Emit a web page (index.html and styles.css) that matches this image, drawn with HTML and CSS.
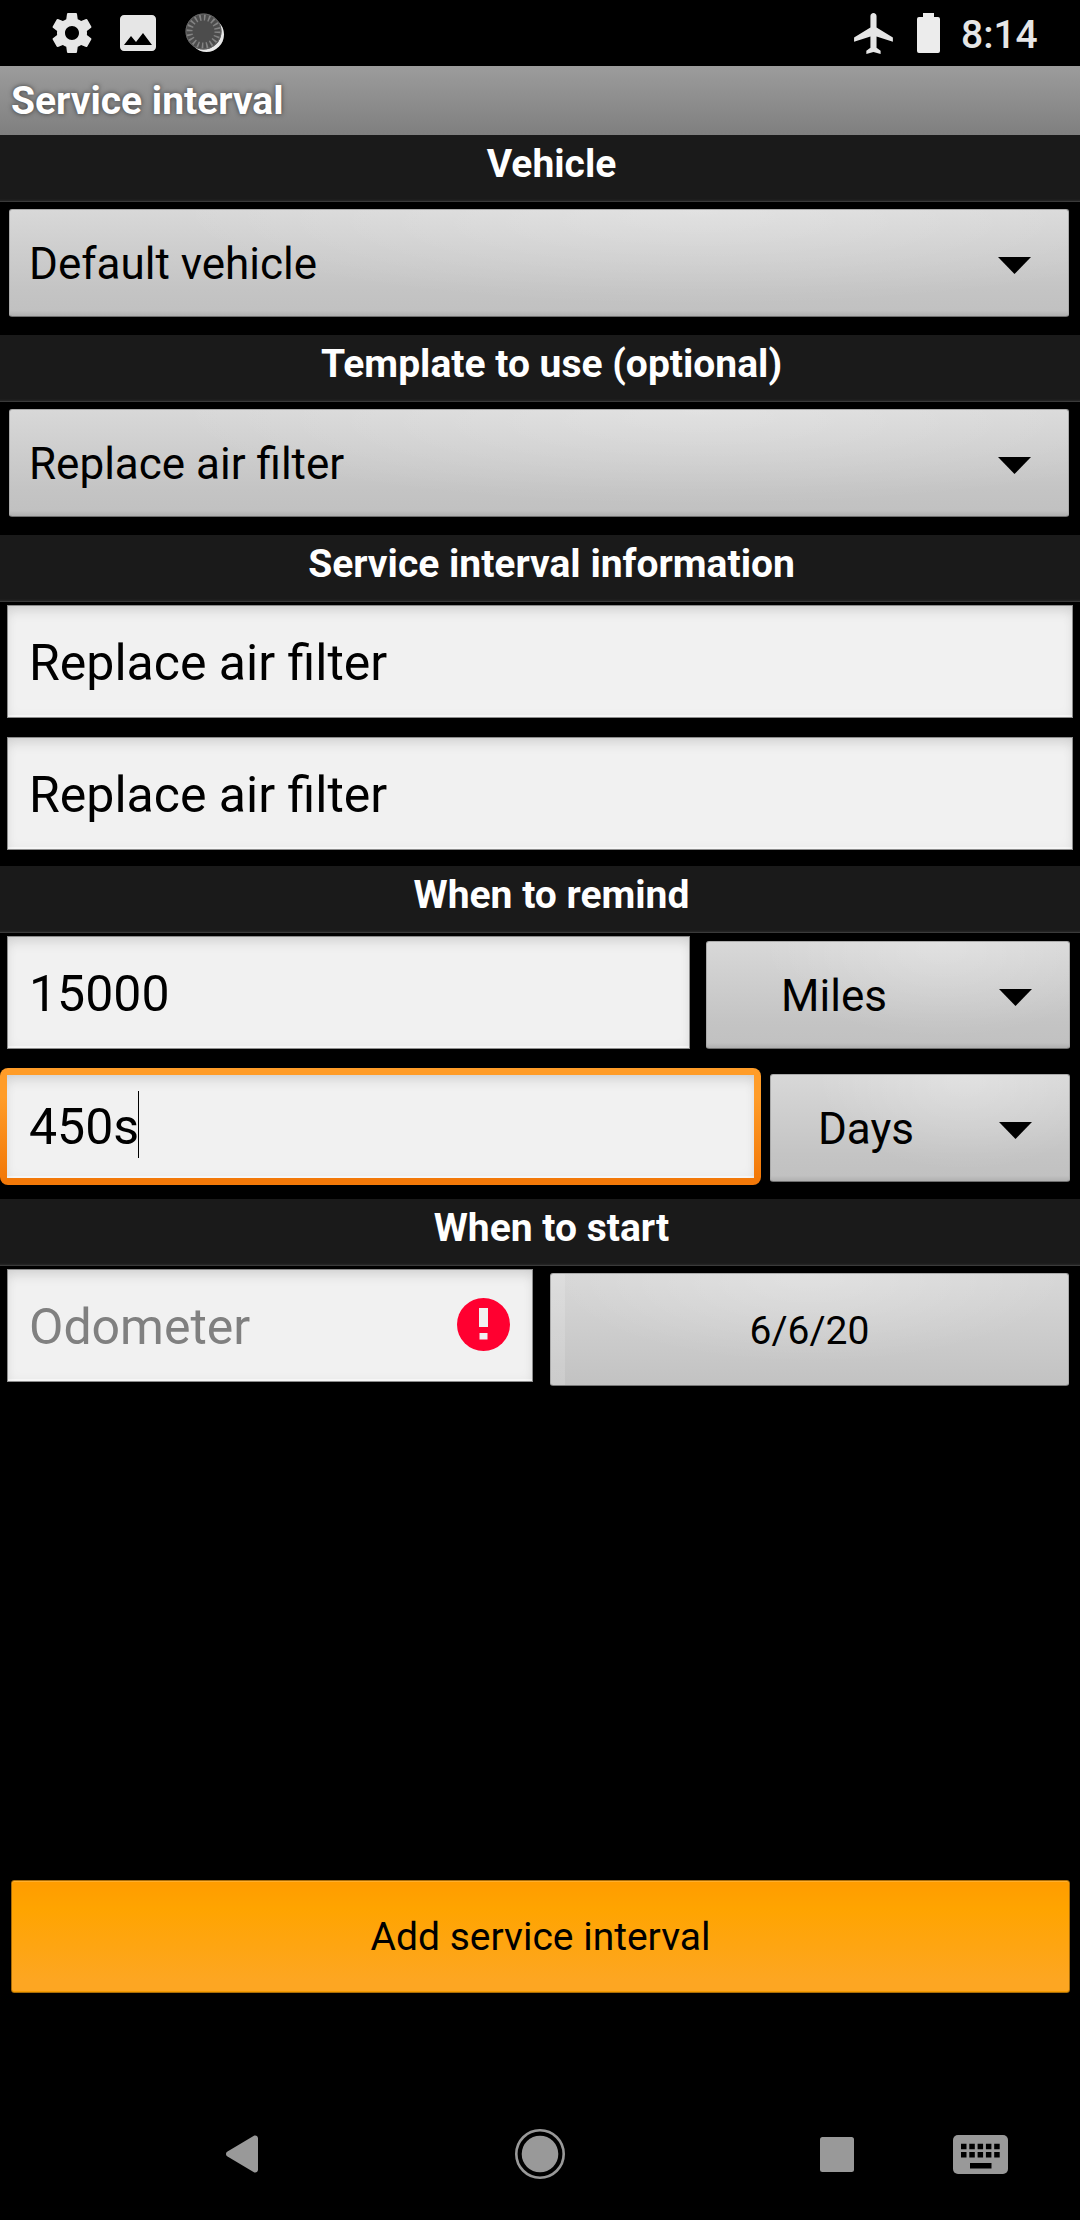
FILE: index.html
```html
<!DOCTYPE html>
<html lang="en">
<head>
<meta charset="utf-8">
<title>Service interval</title>
<link rel="stylesheet" href="styles.css">
</head>
<body>
<div class="status-bar">
  <svg class="gear" width="48" height="48" viewBox="0 0 24 24"><path fill="#e6e6e6" d="M19.43 12.98c.04-.32.07-.64.07-.98s-.03-.66-.07-.98l2.11-1.65c.19-.15.24-.42.12-.64l-2-3.46c-.12-.22-.39-.3-.61-.22l-2.49 1c-.52-.4-1.08-.73-1.69-.98l-.38-2.65C14.46 2.18 14.25 2 14 2h-4c-.25 0-.46.18-.49.42l-.38 2.65c-.61.25-1.17.59-1.69.98l-2.49-1c-.23-.09-.49 0-.61.22l-2 3.46c-.13.22-.07.49.12.64l2.11 1.65c-.04.32-.07.65-.07.98s.03.66.07.98l-2.11 1.65c-.19.15-.24.42-.12.64l2 3.46c.12.22.39.3.61.22l2.49-1c.52.4 1.08.73 1.69.98l.38 2.65c.03.24.24.42.49.42h4c.25 0 .46-.18.49-.42l.38-2.65c.61-.25 1.17-.59 1.69-.98l2.49 1c.23.09.49 0 .61-.22l2-3.46c.12-.22.07-.49-.12-.64l-2.11-1.65zM12 15.5c-1.93 0-3.5-1.57-3.5-3.5s1.57-3.5 3.5-3.5 3.5 1.57 3.5 3.5-1.57 3.5-3.5 3.5z"/></svg>
  <svg class="picture" width="48" height="48" viewBox="0 0 24 24"><path fill="#e6e6e6" d="M21 19V5c0-1.100-.9-2-2-2H5c-1.100 0-2 .9-2 2v14c0 1.100.9 2 2 2h14c1.100 0 2-.9 2-2zM8.500 13.500l2.500 3.010L14.500 12l4.500 6H5l3.500-4.500z"/></svg>
  <svg class="loader" width="40" height="40" viewBox="0 0 40 40">
    <circle cx="21.500" cy="21.500" r="17.500" fill="#e9e9e9"/>
    <circle cx="18.500" cy="18.500" r="18" fill="#4c4c4c"/>
    <circle cx="18.500" cy="18.500" r="14" fill="none" stroke="#838383" stroke-width="6" stroke-dasharray="1.600 2.798"/>
    <circle cx="18.500" cy="18.500" r="17.500" fill="none" stroke="#666" stroke-width="1"/>
  </svg>
  <svg class="plane" width="49" height="49" viewBox="0 0 24 24"><path fill="#e6e6e6" d="M21 16v-2l-8-5V3.500c0-.83-.67-1.500-1.500-1.500S10 2.670 10 3.500V9l-8 5v2l8-2.500V19l-2 1.500V22l3.500-1 3.500 1v-1.500L13 19v-5.500l8 2.500z"/></svg>
  <svg class="battery" width="23" height="40" viewBox="0 0 23 40"><path fill="#ececec" d="M6 0h11v4h4a2 2 0 0 1 2 2v32a2 2 0 0 1-2 2H2a2 2 0 0 1-2-2V6a2 2 0 0 1 2-2h4z"/></svg>
  <span class="clock">8:14</span>
</div>

<h1 class="title-bar">Service interval</h1>

<main class="form">
  <h2 class="section-title">Vehicle</h2>
  <div class="spinner-row">
    <div class="spinner"><span class="spinner-text">Default vehicle</span><svg class="arrow" width="33" height="17" viewBox="0 0 33 17"><path d="M0 0h33L16.500 17z"/></svg></div>
  </div>

  <h2 class="section-title">Template to use (optional)</h2>
  <div class="spinner-row">
    <div class="spinner"><span class="spinner-text">Replace air filter</span><svg class="arrow" width="33" height="17" viewBox="0 0 33 17"><path d="M0 0h33L16.500 17z"/></svg></div>
  </div>

  <h2 class="section-title">Service interval information</h2>
  <div class="info-fields">
    <div class="input">Replace air filter</div>
    <div class="input">Replace air filter</div>
  </div>

  <h2 class="section-title">When to remind</h2>
  <div class="remind-fields">
    <div class="row distance-row">
      <div class="input">15000</div>
      <div class="spinner centered"><span class="spinner-text">Miles</span><svg class="arrow" width="33" height="17" viewBox="0 0 33 17"><path d="M0 0h33L16.500 17z"/></svg></div>
    </div>
    <div class="row time-row">
      <div class="focus-ring"><div class="input">450s<span class="caret"></span></div></div>
      <div class="spinner centered"><span class="spinner-text">Days</span><svg class="arrow" width="33" height="17" viewBox="0 0 33 17"><path d="M0 0h33L16.500 17z"/></svg></div>
    </div>
  </div>

  <h2 class="section-title">When to start</h2>
  <div class="row start-row">
    <div class="input odometer"><span>Odometer</span>
      <svg width="53" height="53" viewBox="0 0 53 53"><circle cx="26.500" cy="26.500" r="26.500" fill="#ff0030"/><path fill="#f1f1f1" d="M22 10h9v19h-9zM22.500 35h8v6.500h-8z"/></svg>
    </div>
    <div class="date-button">6/6/20</div>
  </div>

  <div class="add-button">Add service interval</div>
</main>

<nav class="nav-bar">
  <svg class="back" width="32" height="38" viewBox="0 0 32 38"><path fill="#999" d="M27.500 1C29.500-.2 32 .8 32 3.500v31c0 2.700-2.500 3.700-4.500 2.500L1.500 21.500c-2-1.200-2-3.800 0-5z"/></svg>
  <svg class="home" width="50" height="50" viewBox="0 0 50 50"><circle cx="25" cy="25" r="23.700" fill="none" stroke="#999" stroke-width="2.600"/><circle cx="25" cy="25" r="18.300" fill="#999"/></svg>
  <svg class="recent" width="34" height="35" viewBox="0 0 34 35"><rect width="34" height="35" rx="2.500" fill="#999"/></svg>
  <svg class="keyboard" width="55" height="39" viewBox="0 0 55 39"><rect width="55" height="39" rx="5" fill="#999"/><path stroke="#000" stroke-width="5.500" stroke-dasharray="5.500 2.800" d="M8 11.500h39M8 19.800h39"/><path d="M17 28h21.500v5.500H17z"/></svg>
</nav>
</body>
</html>
```
FILE: styles.css
```css
* {
  box-sizing: border-box;
}

body {
  margin: 0;
  width: 1080px;
  height: 2220px;
  display: flex;
  flex-direction: column;
  background: #000;
  color: #000;
  font-family: Roboto, "Liberation Sans", sans-serif;
  font-size: 39px;
  overflow: hidden;
}

svg {
  display: block;
  flex: none;
}

/* Status bar */
.status-bar {
  height: 66px;
  display: flex;
  align-items: flex-start;
  padding: 9px 42px 0 48px;
}

.picture {
  margin-left: 18px;
}

.loader {
  margin: 4px 0 0 23px;
}

.plane {
  margin-left: auto;
}

.battery {
  margin: 4px 0 0 18px;
}

.clock {
  width: 77px;
  margin: -9px 0 0 21px;
  color: #e6e6e6;
  font-weight: 500;
  line-height: 70px;
  white-space: nowrap;
}

/* Title */
.title-bar {
  height: 69px;
  margin: 0;
  padding-left: 11px;
  background: linear-gradient(#9c9c9c, #7f7f7f);
  color: #fff;
  font-size: 39px;
  font-weight: 700;
  line-height: 71px;
  text-shadow: 0 0 5px rgba(0, 0, 0, 0.6);
}

/* Form */
.form {
  flex: 1;
  display: flex;
  flex-direction: column;
  padding-bottom: 95px;
}

.section-title {
  height: 67px;
  margin: 0;
  padding-left: 23px;
  border-bottom: 1px solid #3a3a3a;
  background: linear-gradient(#1a1a1a 64px, #262626);
  color: #fff;
  font-size: 39px;
  font-weight: 700;
  line-height: 59px;
  text-align: center;
}

.row {
  display: flex;
  align-items: flex-start;
}

.spinner-row {
  height: 133px;
  padding: 7px 11px 0 9px;
}

.spinner {
  display: flex;
  align-items: flex-start;
  height: 108px;
  padding: 0 37px 0 19px;
  border: 1px solid #aaa;
  border-bottom-color: #6f6f6f;
  border-radius: 3px;
  background:
    radial-gradient(ellipse 50% 90% at 65% 0, rgba(255, 255, 255, 0.25), transparent),
    linear-gradient(#d8d8d8, #c4c4c4 75%, #c1c1c1 95%, #b0b0b0);
  font-size: 44px;
  line-height: 108px;
}

.spinner-text {
  flex: 1;
}

.centered .spinner-text {
  padding-right: 57px;
  text-align: center;
}

.arrow {
  margin-top: 47px;
}

.input {
  height: 113px;
  padding-left: 21px;
  border: 1px solid #8c8c8c;
  background: #f1f1f1;
  box-shadow: inset 0 10px 14px -6px rgba(0, 0, 0, 0.12), inset 0 0 12px rgba(0, 0, 0, 0.05), inset 0 -2px 0 #fbfbfb;
  font-size: 50px;
  line-height: 114px;
  white-space: nowrap;
}

.info-fields {
  height: 264px;
  padding: 3px 7px 0;
  display: flex;
  flex-direction: column;
  gap: 19px;
}

.remind-fields {
  height: 266px;
  padding: 3px 10px 0 0;
}

.distance-row {
  height: 132px;
  padding-left: 7px;
  gap: 16px;
}

.distance-row .input {
  width: 683px;
}

.distance-row .spinner {
  flex: 1;
  margin-top: 5px;
}

.distance-row .spinner,
.time-row .spinner {
  line-height: 109px;
}

.time-row {
  gap: 9px;
}

.time-row .spinner {
  flex: 1;
  margin-top: 6px;
}

.focus-ring {
  width: 761px;
  height: 117px;
  padding: 7px;
  border-radius: 8px;
  background: linear-gradient(#ff9c28 25%, #f27808 95%);
}

.focus-ring .input {
  height: 103px;
  padding-left: 22px;
  border: 0;
  line-height: 104px;
  display: flex;
}

.caret {
  width: 1px;
  height: 67px;
  margin: 16px 0 0 -1px;
  background: #000;
}

.start-row {
  padding: 3px 11px 0 7px;
  gap: 17px;
}

.odometer {
  width: 526px;
  display: flex;
  justify-content: space-between;
  padding-right: 22px;
  color: #808080;
}

.odometer svg {
  margin-top: 28px;
}

.date-button {
  flex: 1;
  height: 113px;
  margin-top: 4px;
  border: 1px solid #aaa;
  border-bottom-color: #777;
  border-radius: 3px;
  background:
    linear-gradient(90deg, rgba(255, 255, 255, 0.15) 14px, transparent 14px),
    radial-gradient(ellipse 50% 80% at 50% 0, rgba(255, 255, 255, 0.25), transparent),
    linear-gradient(#d8d8d8, #c2c2c2);
  line-height: 115px;
  text-align: center;
}

.add-button {
  height: 113px;
  margin: auto 10px 0 11px;
  border: 1px solid #a86c08;
  border-radius: 3px;
  background: linear-gradient(#ff9c00, #ffa400 25%, #fda622 90%, #fda622);
  box-shadow: inset 0 1px 0 #ffb030, inset 0 -1px 0 #f49b00;
  line-height: 113px;
  text-align: center;
}

/* System navigation */
.nav-bar {
  height: 132px;
  display: flex;
  align-items: center;
  padding-left: 226px;
}

.home {
  margin-left: 257px;
}

.recent {
  margin-left: 255px;
}

.keyboard {
  margin-left: 99px;
}
```
